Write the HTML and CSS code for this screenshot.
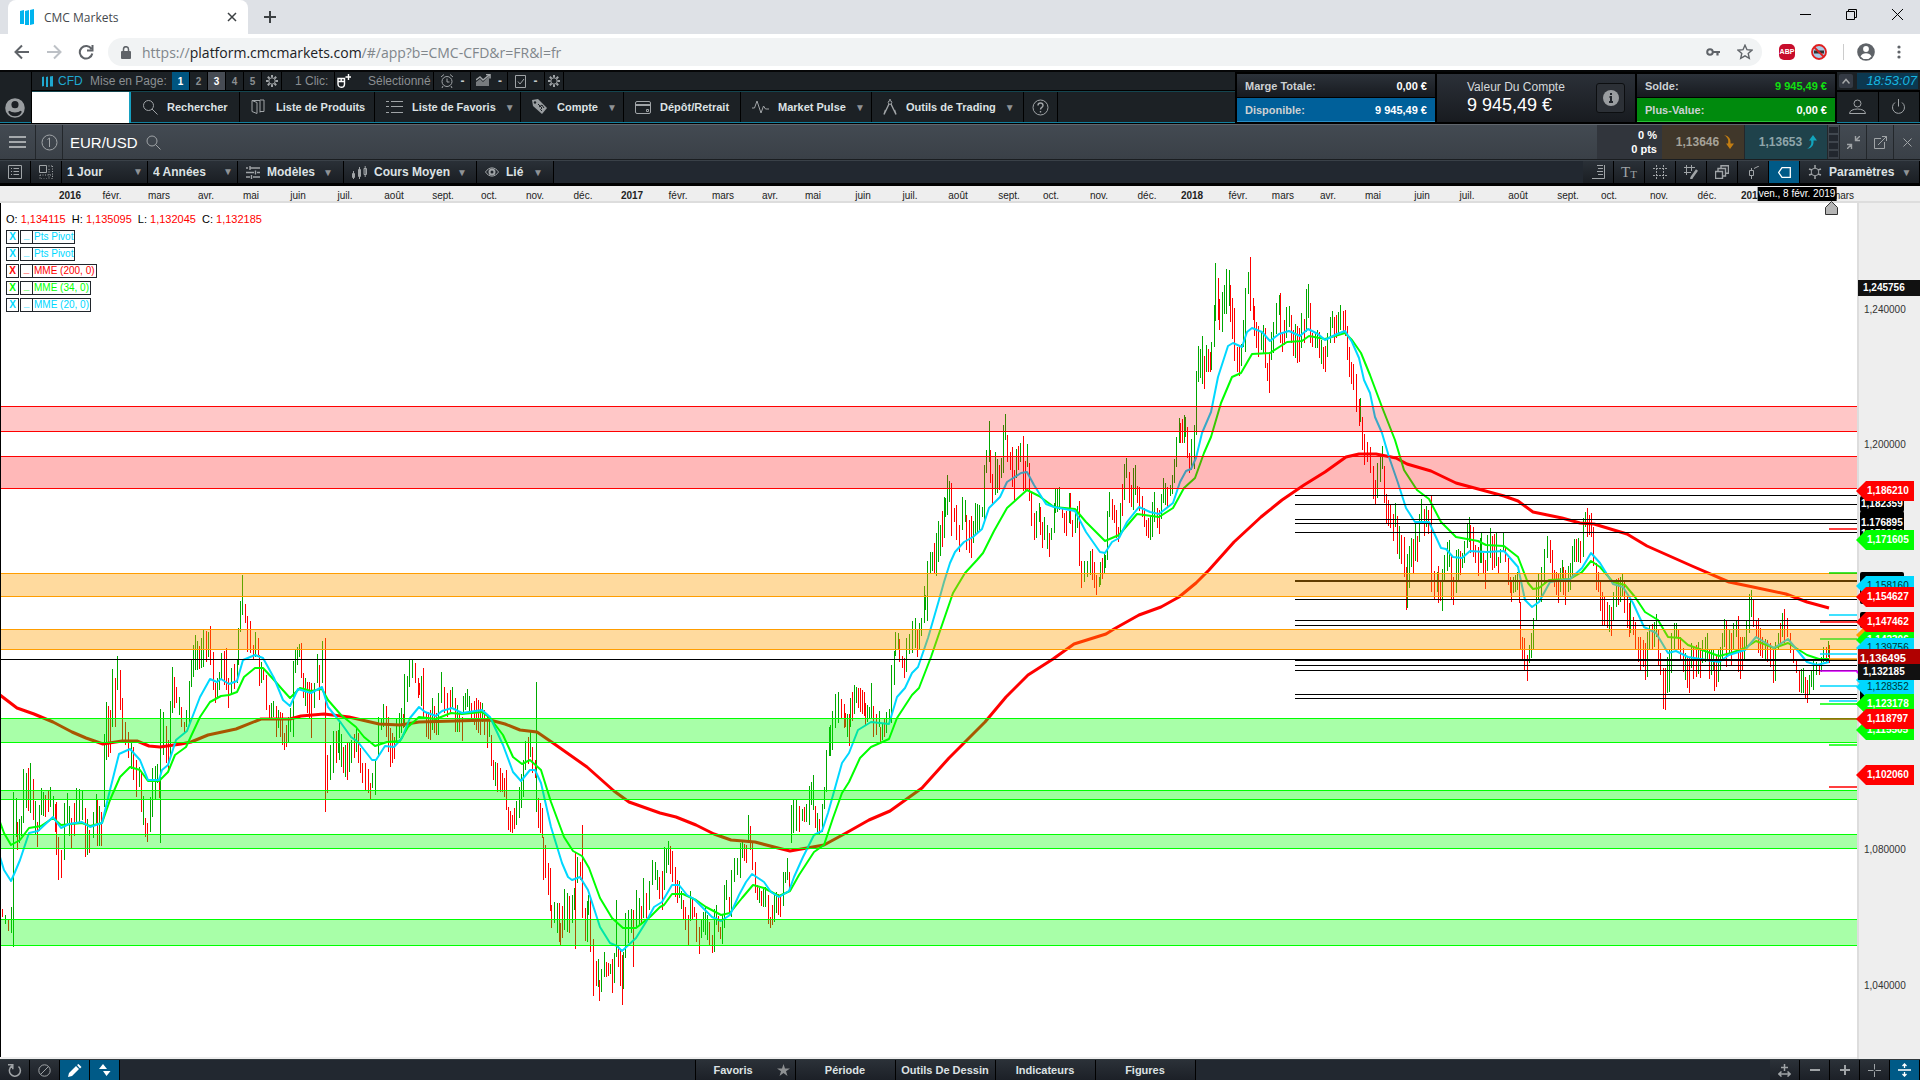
FILE: index.html
```html
<!DOCTYPE html>
<html lang="fr">
<head>
    <meta charset="UTF-8">
    <meta name="viewport" content="width=device-width, initial-scale=1.0">
    <title>CMC Markets</title>
    <link rel="stylesheet" href="styles.css">
</head>
<body>
    <div class="tab-strip">
        <div class="tab">
            <svg class="tab-logo" width="14" height="16" viewBox="0 0 14 16"><path d="M0 2l4-1v14H0zM5 2l4-1v15H5zM10 1l4-1v15l-4 1z" fill="#00b4ee"/></svg>
            <span class="tab-title">CMC Markets</span>
            <button class="tab-close" aria-label="Fermer l'onglet"><svg width="10" height="10" viewBox="0 0 10 10"><path d="M1 1l8 8M9 1l-8 8"/></svg></button>
        </div>
        <button class="tab-new" aria-label="Nouvel onglet"><svg width="12" height="12" viewBox="0 0 12 12"><path d="M6 0v12M0 6h12"/></svg></button>
        <div class="window-buttons">
            <button aria-label="Réduire"><svg width="11" height="11" viewBox="0 0 11 11"><path d="M0 5.500h11"/></svg></button>
            <button aria-label="Restaurer"><svg width="11" height="11" viewBox="0 0 11 11"><path d="M.5 2.500h8v8h-8zM2.500 2.500v-2h8v8h-2"/></svg></button>
            <button aria-label="Fermer"><svg width="11" height="11" viewBox="0 0 11 11"><path d="M0 0l11 11M11 0L0 11"/></svg></button>
        </div>
    </div>

    <div class="browser-bar">
        <button class="nav" aria-label="Précédent"><svg width="16" height="16" viewBox="0 0 16 16"><path d="M15 8H2M8 1.500L1.500 8 8 14.500"/></svg></button>
        <button class="nav off" aria-label="Suivant"><svg width="16" height="16" viewBox="0 0 16 16"><path d="M1 8h13M8 1.500L14.500 8 8 14.500"/></svg></button>
        <button class="nav" aria-label="Actualiser"><svg width="16" height="16" viewBox="0 0 16 16"><path d="M13.500 5A6.300 6.300 0 1 0 14.300 9.500M14.500 1v5.500H9"/></svg></button>
        <div class="address" role="textbox" aria-label="Adresse">
            <svg width="10" height="13" viewBox="0 0 10 13"><rect y="5" width="10" height="8" rx="1" fill="#5f6368"/><path d="M2.500 5V3.200a2.500 2.500 0 0 1 5 0V5" fill="none" stroke="#5f6368" stroke-width="1.500"/></svg>
            <span class="url">https://<b>platform.cmcmarkets.com</b>/#/app?b=CMC-CFD&amp;r=FR&amp;l=fr</span>
            <svg width="14" height="10" viewBox="0 0 14 10"><circle cx="4" cy="5" r="2.800" fill="none" stroke="#5f6368" stroke-width="2"/><path d="M6.500 5H14M11.500 5v3.500" stroke="#5f6368" stroke-width="2.200"/></svg>
            <svg class="star" width="16" height="16" viewBox="0 0 16 16"><path d="M8 1.200l2 4.500 4.900.5-3.700 3.300 1.100 4.900L8 11.900l-4.300 2.500 1.100-4.900L1.100 6.200 6 5.700z" fill="none" stroke="#5f6368" stroke-width="1.400"/></svg>
        </div>
        <div class="extensions">
            <span class="abp">ABP</span>
            <svg width="16" height="16" viewBox="0 0 16 16"><circle cx="8" cy="8" r="7" fill="#a9cbe6" stroke="#e02020" stroke-width="1.800"/><path d="M3 8h10" stroke="#333" stroke-width="3"/><path d="M3 3l10 10" stroke="#e02020" stroke-width="1.800"/></svg>
            <span class="divider"></span>
            <svg class="user" width="18" height="18" viewBox="0 0 18 18"><circle cx="9" cy="9" r="8.800" fill="#5f6368"/><circle cx="9" cy="6" r="2.900" fill="#fff"/><path d="M3.500 13.400a6.300 6.300 0 0 1 11 0 7 7 0 0 1-11 0z" fill="#fff"/></svg>
            <svg width="4" height="14" viewBox="0 0 4 14" fill="#5f6368"><circle cx="2" cy="2" r="1.600"/><circle cx="2" cy="7" r="1.600"/><circle cx="2" cy="12" r="1.600"/></svg>
        </div>
    </div>

    <header class="header">
        <div class="avatar"><svg width="20" height="20" viewBox="0 0 18 18"><circle cx="9" cy="9" r="8.800" fill="#999da0"/><circle cx="9" cy="6" r="3.200" fill="#1c2025"/><path d="M3.500 12a6 3 0 0 0 11 0 6 6 0 0 1-11 0z" fill="#1c2025" stroke="#1c2025" stroke-width="1.500"/></svg></div>
        <div class="header-main">
            <div class="top-row">
                <svg class="brand-logo" width="11" height="11" viewBox="0 0 11 11"><path d="M0 1l2-.5V10l-2 .5zM4 1l2-.5V11H4zM8 .5l3-.5v10.500H8z" fill="#1fa8d0"/></svg>
                <span class="brand">CFD</span>
                <span class="layout-label">Mise en Page:</span>
                <button class="page active">1</button>
                <button class="page">2</button>
                <button class="page current">3</button>
                <button class="page">4</button>
                <button class="page">5</button>
                <button class="page gear" aria-label="Réglages de la mise en page"><svg class="ico" width="12" height="12" viewBox="0 0 12 12"><circle cx="6" cy="6" r="3.200"/><path d="M6 0v2.500M6 9.500V12M0 6h2.500M9.500 6H12M1.800 1.800l1.700 1.700M8.500 8.500l1.700 1.700M10.200 1.800L8.500 3.500M3.500 8.500l-1.700 1.700" stroke-width="2"/></svg></button>
                <span class="click-label">1 Clic:</span>
                <button class="mouse" aria-label="1 Clic"><svg width="14" height="14" viewBox="0 0 14 14" fill="none" stroke="#fff" stroke-width="1.400"><path d="M1 4.500h6.500V10a3 3 0 0 1-6.500 0zM1 7.500h6.500M4.200 4.500v3M11.500 0v6M8.500 3H14"/></svg></button>
                <span class="selected-label">Sélectionné</span>
                <button class="quick" aria-label="Alertes"><svg class="ico" width="14" height="14" viewBox="0 0 14 14"><circle cx="7" cy="7.500" r="5"/><path d="M7 4.500v3.500h2.500M1 3l3-2.500M13 3l-3-2.500M3 12l-1 2M11 12l1 2"/></svg><b>-</b></button>
                <button class="quick" aria-label="Positions"><svg class="ico" width="15" height="14" viewBox="0 0 15 14"><path d="M0 12V8l4-3 3 3 6-6v10z" fill="#777b7e" stroke="none"/><path d="M0 6l4-3 3 3 7-5.500M10 .5h4v4" stroke-width="1.500"/></svg><b>-</b></button>
                <button class="quick" aria-label="Ordres"><svg class="ico" width="12" height="14" viewBox="0 0 12 14"><path d="M.5 1.500h10v12H.5zM3 7.500L5 10l4-5"/></svg><b>-</b></button>
                <button class="page gear" aria-label="Réglages"><svg class="ico" width="12" height="12" viewBox="0 0 12 12"><circle cx="6" cy="6" r="3.200"/><path d="M6 0v2.500M6 9.500V12M0 6h2.500M9.500 6H12M1.800 1.800l1.700 1.700M8.500 8.500l1.700 1.700M10.200 1.800L8.500 3.500M3.500 8.500l-1.700 1.700" stroke-width="2"/></svg></button>
            </div>
            <nav class="menu-row">
                <div class="account-box"></div>
                <button class="menu w-search"><svg class="ico" width="16" height="16" viewBox="0 0 16 16"><circle cx="6.500" cy="6.500" r="5"/><path d="M10 10l5.500 5.500"/></svg><span>Rechercher</span></button>
                <button class="menu w-products"><svg class="ico" width="14" height="16" viewBox="0 0 14 16"><path d="M1 1.500h8v12M1 1.500l5 2v11l-5-2zM9 1h4v11.500H9"/></svg><span>Liste de Produits</span></button>
                <button class="menu w-fav"><svg class="ico" width="17" height="14" viewBox="0 0 17 14"><path d="M0 1.500h3M0 6.500h3M0 12.500h3M5 1.500h12M5 6.500h12M5 12.500h12"/></svg><span>Liste de Favoris</span><i>▼</i></button>
                <button class="menu w-account"><svg width="16" height="16" viewBox="0 0 16 16"><path d="M0 1l6-1 9 9-5 6L1 7z" fill="#999da0"/><circle cx="3" cy="3.500" r="1.200" fill="#1c2125"/><path d="M6 5l4 4-1.500 1.500L10 12M7 8l3-2 2 3" fill="none" stroke="#1c2125"/></svg><span>Compte</span><i>▼</i></button>
                <button class="menu w-deposit"><svg class="ico" width="16" height="13" viewBox="0 0 16 13"><rect x=".5" y=".5" width="15" height="12" rx="1.500"/><path d="M0 4h16" stroke-width="2"/><path d="M11.500 8.500h2v2h-2z"/></svg><span>Dépôt/Retrait</span></button>
                <button class="menu w-pulse"><svg class="ico" width="17" height="14" viewBox="0 0 17 14"><path d="M0 8h2.500L5 1l4 12 2.500-7 2 3H17"/></svg><span>Market Pulse</span><i>▼</i></button>
                <button class="menu w-tools"><svg class="ico" width="14" height="16" viewBox="0 0 14 16"><circle cx="7" cy="3.500" r="1.800"/><path d="M7 0v1.500M6 5L1 15.500 2.500 11M8 5l5 10.500-1.500-4.500" stroke-width="1.400"/></svg><span>Outils de Trading</span><i>▼</i></button>
                <button class="menu w-help" aria-label="Aide"><svg class="ico" width="17" height="17" viewBox="0 0 17 17"><circle cx="8.500" cy="8.500" r="7.500"/><path d="M6 6.500c0-3.300 5-3.300 5 0 0 2-2.500 1.800-2.500 4M8.500 12v1.500" stroke-width="1.400"/></svg></button>
            </nav>
        </div>
        <div class="funds">
            <dl class="fund-pair">
                <div class="fund"><dt>Marge Totale:</dt><dd>0,00 €</dd></div>
                <div class="fund available"><dt>Disponible:</dt><dd>9 945,49 €</dd></div>
            </dl>
            <div class="account-value">
                <p>Valeur Du Compte<strong>9 945,49 €</strong></p>
                <button class="info" aria-label="Informations"><svg width="16" height="16" viewBox="0 0 16 16"><circle cx="8" cy="8" r="8" fill="#9a9da0"/><path d="M8 3v2M6.500 7H8v5M6 12h4" fill="none" stroke="#20242a" stroke-width="2"/></svg></button>
            </div>
            <dl class="fund-pair">
                <div class="fund"><dt>Solde:</dt><dd class="positive">9 945,49 €</dd></div>
                <div class="fund profit"><dt>Plus-Value:</dt><dd>0,00 €</dd></div>
            </dl>
        </div>
        <div class="session">
            <div class="session-top">
                <button class="collapse" aria-label="Replier"><svg width="8" height="6" viewBox="0 0 8 6"><path d="M.5 5.500L4 1.500l3.500 4" fill="none" stroke="#a5a8aa" stroke-width="1.500"/></svg></button>
                <time class="clock">18:53:07</time>
            </div>
            <div class="session-bottom">
                <button aria-label="Profil"><svg class="ico" width="17" height="16" viewBox="0 0 17 16"><circle cx="8.500" cy="4.500" r="3.500"/><path d="M.5 14.500c0-6 16-6 16 0z"/></svg></button>
                <button aria-label="Déconnexion"><svg class="ico" width="15" height="16" viewBox="0 0 15 16"><path d="M4 3.500a6 6 0 1 0 7 0M7.500 0v7.500"/></svg></button>
            </div>
        </div>
    </header>

    <section class="title-bar">
        <button class="burger" aria-label="Menu"><svg width="17" height="13" viewBox="0 0 17 13"><path d="M0 1h17M0 6h17M0 11h17"/></svg></button>
        <button class="group" aria-label="Groupe 1"><svg class="ico" width="17" height="17" viewBox="0 0 17 17"><circle cx="8.500" cy="8.500" r="7.500"/><path d="M6.500 5.500l2-1.500v9"/></svg></button>
        <h1>EUR/USD</h1>
        <svg class="ico find" width="15" height="15" viewBox="0 0 15 15"><circle cx="6" cy="6" r="5"/><path d="M9.500 9.500l5 5"/></svg>
        <div class="change"><span>0 %</span><span>0 pts</span></div>
        <button class="quote sell">1,13646<svg width="10" height="14" viewBox="0 0 10 14"><path d="M0 0c5 1 7 4 6.500 8.500H10L6 14 2 8.500h2C5 5 3.500 2 0 0z" fill="#c27d12"/></svg></button>
        <button class="quote buy">1,13653<svg width="10" height="14" viewBox="0 0 10 14"><path d="M0 14c5-1 7-4 6.500-8.500H10L6 0 2 5.500h2C5 9 3.500 12 0 14z" fill="#12a5bd"/></svg></button>
        <div class="grip"><span></span><span></span><span></span><span></span></div>
        <button class="win" aria-label="Réduire"><svg class="ico" width="13" height="13" viewBox="0 0 13 13"><path d="M13 0L8.500 4.500M8.500 0v4.500H13M0 13l4.500-4.500M0 8.500h4.500V13" stroke-width="1.400"/></svg></button>
        <button class="win" aria-label="Détacher"><svg class="ico" width="13" height="13" viewBox="0 0 13 13"><path d="M7 2.500H.5v10h10V6M4 9l8.500-8.500M8 .5h4.500V5"/></svg></button>
        <button class="win" aria-label="Fermer"><svg class="ico" width="9" height="9" viewBox="0 0 9 9"><path d="M.5.5l8 8M8.500.5l-8 8"/></svg></button>
    </section>

    <section class="toolbar">
        <button class="tool" aria-label="Liste"><svg class="ico" width="14" height="14" viewBox="0 0 14 14"><path d="M.5.5h13v13H.5zM3 3.500h1M3 6.500h1M3 9.500h1M5.500 3.500H11M5.500 6.500H11M5.500 9.500H11"/></svg></button>
        <button class="tool" aria-label="Disposition"><svg class="ico" width="14" height="14" viewBox="0 0 14 14"><path d="M.5.5h7v7h-7z"/><path d="M9.500 1H14M13.500 1v13M10 4v10M1 10v4h13M1 10h13" stroke-dasharray="1 1.500"/></svg></button>
        <label class="drop w-period"><select aria-label="Intervalle"><option>1 Jour</option></select><i>▼</i></label>
        <label class="drop w-range"><select aria-label="Durée"><option>4 Années</option></select><i>▼</i></label>
        <button class="menu w-models"><svg class="ico" width="14" height="13" viewBox="0 0 14 13"><path d="M0 2h2M4 2h10M4 0v4M0 6.500h8M11 6.500h3M9.500 4.500v4M0 11h4M7 11h7M5.500 9v4" stroke-width="1.400"/></svg><span>Modèles</span><i>▼</i></button>
        <button class="menu w-mid"><svg class="ico" width="15" height="13" viewBox="0 0 15 13"><path d="M.5 7.500h2v4h-2zM1.500 5v8M6.500 3.500h2v7h-2zM7.500 1v12M12 2.500h2.500v6H12zM13.200 0v11"/></svg><span>Cours Moyen</span><i>▼</i></button>
        <button class="menu w-linked"><svg class="ico" width="14" height="10" viewBox="0 0 14 10"><path d="M.5 5C4-.5 10-.5 13.500 5 10 10.500 4 10.500.5 5z"/><circle cx="7" cy="5" r="2.500" stroke-width="2"/></svg><span>Lié</span><i>▼</i></button>
        <div class="spacer"></div>
        <button class="tool" aria-label="Échelle"><svg class="ico" width="13" height="14" viewBox="0 0 13 14"><path d="M5 .5h6M6 3.500h5M5 6.500h6M6 9.500h5M0 13.500h12.500V0"/></svg></button>
        <button class="tool letters" aria-label="Texte">T<small>T</small></button>
        <button class="tool" aria-label="Grille"><svg class="ico" width="14" height="14" viewBox="0 0 14 14"><path d="M0 3.500h14M0 10.500h14M3.500 0v14M10.500 0v14" stroke-dasharray="2 1"/></svg></button>
        <button class="tool" aria-label="Dessin"><svg class="ico" width="14" height="14" viewBox="0 0 14 14"><path d="M0 2.500h11M0 7.500h7M2.500 0v10M7.500 0v6"/><path d="M13 5l-5 7-1 2" stroke-width="2.500"/></svg></button>
        <button class="tool" aria-label="Calques"><svg class="ico" width="14" height="14" viewBox="0 0 14 14"><path d="M.5 6.500h7v7h-7zM3 6V3.500h7.500V11H8M6 3V.8h7.500v7.500h-3" stroke-width="1.400"/></svg></button>
        <button class="tool" aria-label="Bougie"><svg class="ico" width="13" height="13" viewBox="0 0 13 13"><path d="M2.500 4.500h4v5h-4zM4.500 2v2.500M4.500 9.500V13M7 2.500L12 0"/></svg></button>
        <button class="tool on" aria-label="Étiquettes de prix"><svg width="13" height="11" viewBox="0 0 13 11"><path d="M4 .7h8.300v9.600H4L.7 5.500z" fill="none" stroke="#fff" stroke-width="1.300"/></svg></button>
        <button class="menu w-settings"><svg class="ico" width="14" height="14" viewBox="0 0 14 14"><circle cx="7" cy="7" r="3.800"/><path d="M7 0v3M7 11v3M1 4l3 1M10 9l3 1M1 10l3-1M10 5l3-1" stroke-width="1.500"/></svg><span>Paramètres</span><i>▼</i></button>
    </section>

    <main class="chart">
        <div class="time-axis" id="time-axis"></div>
        <div class="plot">
            <svg class="plot-svg" id="plot" viewBox="0 203 1857 854" preserveAspectRatio="none"></svg>
            <div class="legend">
                <p class="ohlc">O: <b>1,134115</b> H: <b>1,135095</b> L: <b>1,132045</b> C: <b>1,132185</b></p>
                <div class="indicator cyan"><button aria-label="Supprimer">X</button><button class="hide" aria-label="Masquer">_</button><span>Pts Pivot</span></div>
                <div class="indicator cyan"><button aria-label="Supprimer">X</button><button class="hide" aria-label="Masquer">_</button><span>Pts Pivot</span></div>
                <div class="indicator red"><button aria-label="Supprimer">X</button><button class="hide" aria-label="Masquer">_</button><span>MME (200, 0)</span></div>
                <div class="indicator green"><button aria-label="Supprimer">X</button><button class="hide" aria-label="Masquer">_</button><span>MME (34, 0)</span></div>
                <div class="indicator cyan"><button aria-label="Supprimer">X</button><button class="hide" aria-label="Masquer">_</button><span>MME (20, 0)</span></div>
            </div>
        </div>
        <div class="price-axis" id="price-axis"></div>
    </main>

    <footer class="footer">
        <div class="footer-group">
            <button class="foot-icon" aria-label="Réinitialiser"><svg class="ico" width="14" height="13" viewBox="0 0 14 13"><path d="M4 2a5.500 5.500 0 1 0 6.500.5M0 .8h4.800v4.500" stroke-width="1.500"/></svg></button>
            <button class="foot-icon" aria-label="Aucun"><svg class="ico" width="13" height="13" viewBox="0 0 13 13"><circle cx="6.500" cy="6.500" r="5.700"/><path d="M2.500 10.500l8-8"/></svg></button>
            <button class="foot-icon on" aria-label="Crayon"><svg width="14" height="13" viewBox="0 0 14 13"><path d="M0 13l1-4 7-7 3 3-7 7zM9 1l1.500-1 3 3L12 4.500z" fill="#fff"/></svg></button>
            <button class="foot-icon on" aria-label="Haut et bas"><svg width="12" height="12" viewBox="0 0 12 12"><path d="M0 5l4-5 4 5zM4 7h7.500l-4 5z" fill="#fff"/></svg></button>
        </div>
        <div class="footer-group">
            <button class="foot-tab">Favoris<svg class="fav" width="13" height="12" viewBox="0 0 13 12"><path d="M6.500 0L8 4.500h5L9 7.300l1.500 4.700-4-2.900-4 2.900L4 7.300 0 4.500h5z" fill="#8d9092"/></svg></button>
            <button class="foot-tab">Période</button>
            <button class="foot-tab">Outils De Dessin</button>
            <button class="foot-tab">Indicateurs</button>
            <button class="foot-tab">Figures</button>
        </div>
        <div class="footer-group">
            <button class="foot-icon" aria-label="Étendre"><svg class="ico" width="13" height="13" viewBox="0 0 13 13"><path d="M6.500 0v7M3 3.500h7M.8 10h11.400M3.500 7.500L.8 10l2.700 2.500M9.500 7.500l2.700 2.500-2.700 2.500" stroke-width="1.500"/></svg></button>
            <button class="foot-icon" aria-label="Zoom arrière"><svg class="ico" width="10" height="10" viewBox="0 0 10 10"><path d="M0 5h10" stroke-width="2"/></svg></button>
            <button class="foot-icon" aria-label="Zoom avant"><svg class="ico" width="10" height="10" viewBox="0 0 10 10"><path d="M0 5h10M5 0v10" stroke-width="2"/></svg></button>
            <button class="foot-icon" aria-label="Curseur"><svg class="ico" width="13" height="13" viewBox="0 0 13 13"><path d="M0 6.500h5.500M7.500 6.500H13M6.500 0v5.500M6.500 7.500V13"/></svg></button>
            <button class="foot-icon on" aria-label="Ajuster"><svg width="13" height="14" viewBox="0 0 13 14"><path d="M0 7h13M6.500 1v4M6.500 9v4M4.500 3l2-2 2 2M4.500 11l2 2 2-2" fill="none" stroke="#fff" stroke-width="1.300"/></svg></button>
        </div>
    </footer>

    <script src="chart.js"></script>
</body>
</html>
```
FILE: styles.css
```css
* {
    box-sizing: border-box;
}
body {
    margin: 0;
    height: 100vh;
    display: flex;
    flex-direction: column;
    overflow: hidden;
    background: #000;
    font-family: "Liberation Sans", Arial, sans-serif;
    font-size: 11px;
}
button {
    margin: 0;
    padding: 0;
    border: 0;
    background: none;
    color: inherit;
    font: inherit;
    cursor: pointer;
    display: flex;
    align-items: center;
    justify-content: center;
}
svg {
    display: block;
    flex: none;
}
i {
    font-style: normal;
}
dl, dd, p, h1 {
    margin: 0;
}
.ico {
    fill: none;
    stroke: #a0a4a7;
    stroke-width: 1;
}

/* browser */
.tab-strip {
    flex: none;
    height: 34px;
    background: #dee1e6;
    display: flex;
    padding-left: 8px;
}
.tab {
    width: 240px;
    background: #fff;
    border-radius: 8px 8px 0 0;
    display: flex;
    align-items: center;
    padding: 0 11px 0 12px;
}
.tab-title {
    flex: 1;
    margin-left: 10px;
    font: 12px "Open Sans", sans-serif;
    color: #45494d;
}
.tab-close path, .tab-new path {
    fill: none;
    stroke: #3c4043;
    stroke-width: 2;
}
.tab-close path {
    stroke-width: 1.5;
}
.tab-new {
    margin-left: 16px;
}
.window-buttons {
    margin-left: auto;
    display: flex;
}
.window-buttons button {
    width: 46px;
    height: 28px;
}
.window-buttons path {
    fill: none;
    stroke: #000;
}
.browser-bar {
    flex: none;
    height: 36px;
    background: #fff;
    display: flex;
    align-items: center;
    padding-left: 6px;
}
.nav {
    width: 32px;
}
.nav path {
    fill: none;
    stroke: #5f6368;
    stroke-width: 2;
}
.nav.off path {
    stroke: #bdc1c6;
}
.address {
    flex: 1;
    height: 28px;
    margin-left: 6px;
    padding: 0 9px 0 13px;
    border-radius: 14px;
    background: #f1f3f4;
    display: flex;
    align-items: center;
}
.url {
    flex: 1;
    margin-left: 11px;
    font: 14px "Open Sans", sans-serif;
    color: #80868b;
}
.url b {
    font-weight: normal;
    color: #202124;
}
.star {
    margin-left: 17px;
}
.extensions {
    width: 158px;
    display: flex;
    align-items: center;
    gap: 16px;
    padding-left: 17px;
}
.abp {
    width: 16px;
    height: 16px;
    border-radius: 5px;
    background: #c70d2c;
    color: #fff;
    font-size: 7px;
    font-weight: bold;
    line-height: 16px;
    text-align: center;
}
.divider {
    width: 1px;
    height: 16px;
    background: #ccc;
}
.extensions .user {
    margin: 0 6px 0 -3px;
}

/* platform header */
.header {
    flex: none;
    height: 54px;
    border-top: 2px solid #050607;
    border-bottom: 1px solid #000;
    box-shadow: inset 0 -1px #12809f;
    background: #1c2125;
    display: flex;
    color: #d5d9db;
}
.avatar {
    width: 32px;
    padding: 26px 0 0 5px;
    border-right: 1px solid #000;
}
.header-main {
    flex: 1;
    min-width: 0;
}
.top-row {
    height: 19px;
    border-bottom: 1px solid #000;
    display: flex;
    align-items: center;
    color: #8b8f92;
    font-size: 12px;
    padding-left: 10px;
    white-space: nowrap;
}
.brand {
    width: 32px;
    margin-left: 5px;
    color: #1fa8d0;
}
.brand-logo {
    margin-top: 1px;
}
.layout-label {
    width: 75px;
}
.page {
    width: 18px;
    height: 18px;
    border-right: 1px solid #000;
    font-size: 10px;
    font-weight: bold;
}
.layout-label + .page {
    margin-left: 7px;
}
.page.active {
    background: #005580;
    color: #fff;
}
.page.current {
    background: #474c54;
    color: #fff;
}
.page.gear {
    width: 20px;
}
.click-label {
    margin-left: 13px;
    width: 39px;
}
.mouse {
    width: 18px;
    height: 18px;
    border-left: 1px solid #000;
}
.selected-label {
    margin-left: 16px;
    width: 65px;
}
.quick {
    width: 37px;
    height: 18px;
    gap: 7px;
    border-left: 1px solid #000;
    color: #c5c9cc;
}
.quick + .page {
    border-left: 1px solid #000;
}
.menu-row {
    height: 32px;
    border-top: 1px solid #14454f;
    display: flex;
}
.account-box {
    width: 99px;
    height: 31px;
    background: #fff;
    border-right: 2px solid #16a0c0;
}
.menu {
    height: 100%;
    border-right: 1px solid #000;
    font-weight: bold;
    color: #dde2e4;
    white-space: nowrap;
    justify-content: flex-start;
    padding-left: 11px;
    gap: 9px;
}
.menu i, .drop i {
    color: #8f9396;
    font-size: 10px;
}
.menu i {
    margin-left: auto;
    margin-right: 10px;
}
.menu-row .menu {
    height: 30px;
}
.w-search { width: 109px; }
.w-products { width: 135px; gap: 11px; }
.w-fav { width: 146px; }
.w-account { width: 103px; }
.w-deposit { width: 117px; }
.w-pulse { width: 131px; }
.w-tools { width: 152px; }
.w-help { width: 34px; padding-left: 8px; }
.funds {
    display: flex;
    gap: 2px;
    padding: 2px 2px 1px 2px;
    background: #000;
}
.fund-pair {
    width: 198px;
    display: flex;
    flex-direction: column;
    gap: 1px;
}
.fund {
    flex: 1;
    display: flex;
    align-items: center;
    justify-content: space-between;
    padding: 0 8px;
    background: linear-gradient(#2c323a, #171a1f);
    font-weight: bold;
    color: #cdd1d3;
}
.fund dd {
    color: #fff;
}
.fund.available {
    background: #00609a;
    border-bottom: 1px solid #2a8fc8;
}
.fund.profit {
    background: #008a0d;
    border-bottom: 1px solid #29c236;
}
.fund .positive {
    color: #10e010;
}
.account-value {
    width: 198px;
    display: flex;
    justify-content: space-between;
    align-items: center;
    padding: 0 10px 0 30px;
    background: linear-gradient(#2b3038, #181b20);
    font-size: 12px;
}
.account-value strong {
    display: block;
    font-weight: normal;
    font-size: 18px;
    line-height: 22px;
    color: #fff;
}
.info {
    width: 29px;
    height: 30px;
    border: 1px solid #0c0e10;
    border-radius: 3px;
    background: #2c3036;
}
.session {
    width: 83px;
}
.session-top {
    height: 20px;
    display: flex;
    align-items: center;
    justify-content: space-between;
    padding: 0 2px;
    border-bottom: 2px solid #000;
}
.collapse {
    width: 14px;
    height: 14px;
    background: #343a44;
    border-radius: 2px;
}
.clock {
    width: 61px;
    height: 16px;
    padding-right: 1px;
    background: #0c3850;
    color: #17b6e0;
    font-size: 13px;
    font-style: italic;
    line-height: 16px;
    text-align: right;
}
.session-bottom {
    display: flex;
    height: 30px;
}
.session-bottom button {
    flex: 1;
    border-right: 1px solid #000;
}

/* instrument title */
.title-bar {
    flex: none;
    height: 36px;
    border-top: 1px solid #60666d;
    border-bottom: 1px solid #1a1d20;
    background: linear-gradient(#434a52, #3a4047);
    display: flex;
    align-items: center;
    color: #fff;
}
.title-bar button {
    height: 100%;
    border-right: 1px solid #23272b;
}
.burger {
    width: 36px;
}
.burger path {
    stroke: #a5a9ac;
    stroke-width: 2;
}
.title-bar .group {
    width: 27px;
}
.title-bar h1 {
    margin: 0 8px 0 7px;
    font-size: 15px;
    font-weight: normal;
}
.change {
    width: 65px;
    height: 100%;
    margin-left: auto;
    padding-right: 5px;
    background: #31353c;
    display: flex;
    flex-direction: column;
    justify-content: center;
    text-align: right;
    font-weight: bold;
    line-height: 14px;
}
.title-bar .quote {
    width: 83px;
    padding-left: 4px;
    gap: 5px;
    font-size: 12px;
    font-weight: bold;
    color: #a5a298;
}
.title-bar .sell {
    background: #40372a;
}
.title-bar .buy {
    background: #1f424b;
    color: #8fa5aa;
}
.grip {
    width: 11px;
    padding: 0 1px;
    display: flex;
    flex-direction: column;
    gap: 2px;
}
.grip span {
    height: 6px;
    background: #22272e;
}
.title-bar .win {
    width: 27px;
    border-right: 0;
    border-left: 1px solid #23272b;
}

/* chart toolbar */
.toolbar {
    flex: none;
    height: 26px;
    border-top: 1px solid #3a4148;
    border-bottom: 3px solid #000;
    background: #222830;
    display: flex;
}
.toolbar .menu, .tool, .drop {
    background: linear-gradient(#2a3037, #1a1e23);
}
.tool {
    width: 31px;
    border-right: 1px solid #000;
}
.toolbar .menu {
    font-size: 12px;
    padding-left: 8px;
    gap: 7px;
}
.tool.on, .foot-icon.on {
    background: #005a87;
}
.letters {
    font: 15px "Liberation Serif", serif;
    color: #a0a4a7;
}
.letters small {
    font-size: 11px;
    padding-top: 3px;
}
.drop {
    position: relative;
    border-right: 1px solid #000;
    color: #dde2e4;
}
.drop select {
    width: 100%;
    height: 100%;
    padding: 0 5px;
    border: 0;
    appearance: none;
    background: none;
    color: inherit;
    font: bold 12px "Liberation Sans", Arial, sans-serif;
}
.drop i {
    position: absolute;
    right: 4px;
    top: 5px;
    pointer-events: none;
}
.w-period { width: 86px; }
.w-range { width: 90px; }
.w-models { width: 106px; }
.w-mid { width: 133px; }
.w-linked { width: 77px; }
.w-settings { width: 120px; }
.spacer {
    flex: 1;
}

/* chart */
.chart {
    flex: 1;
    min-height: 0;
    display: grid;
    grid-template-columns: 1fr 63px;
    grid-template-rows: 17px 1fr;
    background: #eee;
}
.time-axis {
    grid-column: 1 / 3;
    position: relative;
    border-bottom: 2px solid #ddd;
    font-size: 10px;
    line-height: 19px;
    color: #222;
}
.time-axis span {
    position: absolute;
    transform: translateX(-50%);
    top: 0;
}
.time-axis .year {
    font-weight: bold;
}
.time-axis .cursor-date {
    top: 1px;
    padding: 0 1px;
    background: #000;
    color: #fff;
    line-height: 14px;
    white-space: nowrap;
}
.plot {
    position: relative;
    min-height: 0;
    background: #fff;
    border-bottom: 2px solid #eee;
}
.plot-svg {
    position: absolute;
    width: 100%;
    height: 100%;
    overflow: visible;
}
.legend {
    position: absolute;
    left: 6px;
    top: 10px;
    font-size: 10px;
}
.ohlc {
    height: 17px;
    line-height: 13px;
    color: #000;
    font-size: 11px;
}
.ohlc b {
    font-weight: normal;
    color: red;
    margin-right: 3px;
}
.indicator {
    display: flex;
    height: 14px;
    margin-bottom: 3px;
    line-height: 12px;
}
.indicator button, .indicator span {
    border: 1px solid #20252b;
    height: 14px;
    background: #fff;
}
.indicator button {
    width: 13px;
    margin-right: 1px;
    font-weight: bold;
}
.indicator .hide {
    margin-right: 0;
    align-items: flex-start;
    line-height: 8px;
}
.indicator span {
    margin-left: -1px;
    padding: 0 1px;
}
.cyan { color: #00d8ff; }
.red { color: red; }
.green { color: #0f0; }
.price-axis {
    position: relative;
    border-left: 2px solid #ddd;
    font-size: 10px;
}
.price {
    position: absolute;
    left: 5px;
    transform: translateY(-50%);
    line-height: 16px;
    color: #333;
    white-space: nowrap;
}
.price.box {
    left: 1px;
    width: 44px;
    padding-left: 1px;
    height: 16px;
    border-radius: 2px;
    background: #000;
    color: #fff;
    font-weight: bold;
}
.price.wide {
    left: -1px;
    right: 0;
    padding-left: 5px;
    background: #111;
    color: #fff;
    font-weight: bold;
}
.price.wide.last {
    padding-left: 2px;
    font-size: 11px;
    line-height: 18px;
    background: #b00000;
}
.price.tag {
    left: -3px;
    width: 58px;
    padding-left: 11px;
    line-height: 20px;
    height: 20px;
    color: #fff;
    font-weight: bold;
    background: red;
    clip-path: polygon(0 50%, 10px 0, 100% 0, 100% 100%, 10px 100%);
}
.price.tag.lime { background: #0f0; }
.price.tag.aqua { background: #00d8ff; color: #033; font-weight: normal; }
.price.tag.orange { background: #ff9d00; }
.price.tag.violet { background: #d0f; }

/* chart drawing */
.up { stroke: #00a800; }
.down { stroke: #f00; }
.up, .down {
    fill: none;
    shape-rendering: crispEdges;
}
.ma {
    fill: none;
    stroke-width: 2;
    stroke-linejoin: round;
}
.ma.slow {
    stroke-width: 3;
}
.level {
    stroke: #000;
    shape-rendering: crispEdges;
}
.zone {
    shape-rendering: crispEdges;
}

/* footer */
.footer {
    flex: none;
    height: 21px;
    background: #222830;
    border-top: 1px solid #30383c;
    display: flex;
    justify-content: space-between;
    color: #dde2e4;
    font-weight: bold;
}
.footer-group {
    display: flex;
}
.foot-icon, .foot-tab {
    background: linear-gradient(#2b3138, #1c2027);
    border-right: 1px solid #000;
}
.foot-icon {
    width: 30px;
}
.foot-tab {
    position: relative;
    width: 100px;
}
.foot-tab:first-child {
    padding-right: 24px;
    border-left: 1px solid #000;
    width: 101px;
}
.fav {
    position: absolute;
    right: 5px;
}
```
FILE: chart.js
```js
const SVG_NS = 'http://www.w3.org/2000/svg';
const VIEW = { width: 1857, top: 203, height: 854 };
const plot = document.getElementById('plot');

// one daily bar per entry: x, high, low
const bars = `2 909 917,8 920 931,11 907 933,13 792 947,16 798 837,17 822 850,21 816 836,23 769 823,26 773 808,30 763 813,33 779 820,37 822 847,41 788 815,45 795 817,50 787 807,55 804 832,56 802 855,58 837 880,61 850 878,64 803 860,67 793 823,71 818 848,76 788 823,82 790 820,85 808 857,89 830 853,96 794 823,97 800 846,101 812 846,104 734 807,106 702 760,110 710 753,112 669 727,115 678 727,117 656 690,120 670 710,122 698 740,125 722 745,128 732 758,133 747 780,136 760 797,139 767 787,141 773 812,145 818 837,147 823 842,150 797 832,152 768 817,157 764 783,159 777 798,160 709 843,163 712 755,168 740 770,170 701 757,172 667 713,176 687 703,181 707 727,184 722 732,186 710 727,189 681 723,191 659 687,193 645 677,195 635 670,199 646 669,203 630 667,208 632 657,210 626 665,213 652 690,215 683 703,219 672 690,221 653 680,226 648 690,228 678 708,231 668 695,237 660 683,238 628 665,240 601 632,242 575 615,245 604 623,247 616 652,250 621 653,253 645 660,255 632 657,258 638 655,259 655 686,263 668 680,266 675 710,269 705 720,273 701 717,276 706 737,278 710 728,282 713 745,284 733 750,288 717 743,290 708 732,293 661 737,295 649 673,299 644 657,301 643 678,303 673 698,307 682 713,309 682 718,311 683 738,314 683 708,317 654 683,319 665 700,322 641 683,325 638 812,327 755 793,330 745 780,333 731 773,338 730 753,339 720 760,343 747 773,347 743 780,351 740 763,356 728 752,358 733 763,362 763 783,365 763 790,368 769 793,370 783 799,372 773 788,375 760 795,378 717 757,381 718 730,383 704 727,386 706 737,390 728 767,394 737 759,396 718 743,401 708 733,403 714 728,404 674 727,407 676 702,409 660 687,412 660 678,415 663 683,418 678 698,419 683 695,423 668 717,426 713 737,430 710 740,432 698 730,436 713 735,438 693 735,441 672 703,444 687 713,447 693 717,452 687 707,455 698 732,459 712 732,462 717 741,463 696 713,467 689 707,471 703 720,476 698 730,480 702 735,482 703 722,484 710 735,487 717 748,489 718 737,491 735 766,493 760 780,497 763 792,502 773 792,504 778 797,506 770 810,508 807 830,512 815 833,516 801 825,519 787 818,523 760 797,525 741 770,530 732 757,532 747 773,535 760 778,536 682 812,538 798 828,542 808 838,543 837 880,545 845 878,548 863 895,550 868 911,551 905 928,554 902 923,559 903 942,560 923 945,564 889 930,569 896 933,572 895 923,574 888 910,575 852 949,577 857 883,580 862 880,582 825 918,585 908 941,587 901 942,588 895 915,590 898 952,593 939 996,596 961 986,598 959 987,599 980 1001,601 969 992,604 952 977,606 962 977,610 964 974,612 959 993,614 953 983,616 900 957,618 945 967,622 955 1005,623 952 989,625 913 958,628 910 943,631 909 933,633 910 967,636 890 927,641 906 923,643 878 918,646 893 918,649 881 910,652 860 885,655 862 880,659 877 899,662 871 910,664 847 890,666 848 873,668 841 865,672 851 882,675 867 897,677 880 903,679 881 898,683 900 919,685 907 930,688 915 945,690 891 921,694 907 917,696 913 942,699 927 954,701 920 938,703 912 932,705 907 935,709 922 945,712 935 953,714 909 952,716 905 925,720 927 939,722 915 944,724 885 928,726 880 900,729 897 915,731 870 917,734 858 882,737 858 875,740 843 878,742 842 858,746 845 863,748 815 840,750 826 850,752 842 870,755 862 893,757 885 900,761 891 906,765 887 907,768 895 924,770 917 928,774 893 922,776 892 913,780 895 917,783 872 906,785 872 883,787 858 880,789 872 890,791 805 843,793 800 833,796 800 831,799 806 832,802 809 821,806 804 822,809 786 825,811 782 805,813 775 810,815 806 828,819 819 835,822 804 832,824 787 809,826 750 792,829 727 756,830 725 756,832 711 750,835 694 728,838 692 723,841 699 718,844 704 728,845 713 727,849 714 746,850 698 727,854 685 714,856 687 703,860 688 712,864 692 716,865 703 725,869 707 718,871 683 718,873 706 737,876 714 735,879 711 727,880 727 742,882 723 740,886 712 733,889 709 723,891 665 723,894 651 685,895 632 656,898 633 650,899 639 662,902 656 668,904 658 678,906 638 672,909 634 654,912 621 653,915 618 648,917 630 657,919 623 650,921 618 636,924 586 623,925 595 610,927 561 621,930 552 573,932 552 571,936 533 576,938 521 562,940 525 556,944 497 538,945 498 517,947 475 515,949 481 502,951 483 536,954 508 522,956 505 540,959 525 552,962 497 530,965 500 522,966 515 550,969 520 553,971 516 558,973 521 543,975 503 535,979 505 532,982 507 517,984 465 523,986 450 473,989 421 462,990 450 483,992 474 505,995 452 495,999 465 490,1001 458 478,1003 425 473,1005 414 440,1007 435 462,1010 452 470,1012 447 487,1014 470 500,1016 449 478,1020 443 462,1023 436 491,1025 461 490,1027 444 467,1029 463 501,1031 493 526,1034 513 540,1036 511 538,1039 503 522,1040 507 535,1042 522 548,1044 517 540,1049 533 557,1051 528 540,1054 503 533,1055 489 513,1059 487 510,1062 507 518,1064 513 533,1066 511 536,1069 493 523,1070 493 524,1072 520 537,1077 506 528,1079 501 566,1081 561 588,1084 561 582,1087 561 577,1090 551 575,1092 549 580,1096 575 595,1099 577 587,1100 562 585,1104 554 573,1105 555 568,1107 511 560,1109 492 517,1114 505 523,1116 510 538,1118 527 542,1120 503 532,1124 464 500,1126 458 478,1129 472 503,1131 485 507,1133 468 510,1135 465 495,1137 486 503,1139 487 511,1142 496 517,1146 520 536,1150 515 540,1152 502 537,1154 492 522,1157 508 528,1159 510 534,1163 478 503,1167 487 507,1170 485 496,1172 475 494,1174 459 483,1176 437 467,1179 418 443,1180 423 443,1184 415 443,1185 417 437,1187 427 458,1189 453 473,1191 439 470,1194 425 469,1196 371 435,1198 346 382,1200 349 378,1202 336 384,1204 356 389,1206 345 372,1210 352 372,1211 342 370,1214 305 347,1215 263 321,1218 278 320,1219 299 330,1222 292 332,1224 285 314,1226 269 314,1229 270 306,1230 285 322,1232 298 339,1234 308 361,1237 347 372,1239 345 376,1241 344 366,1243 320 347,1245 288 352,1248 272 294,1250 257 311,1253 298 320,1254 306 336,1256 322 348,1258 326 357,1261 332 350,1263 325 353,1265 328 368,1267 363 381,1269 352 393,1271 332 360,1273 322 353,1276 303 334,1279 295 315,1280 293 343,1282 333 352,1286 307 338,1289 306 327,1291 315 343,1293 330 356,1295 324 358,1297 326 363,1299 328 362,1301 313 348,1304 319 343,1306 289 332,1308 284 318,1310 303 343,1312 333 347,1317 330 348,1319 332 358,1323 347 369,1325 346 372,1327 333 357,1330 317 343,1332 311 328,1334 317 343,1338 312 333,1340 305 330,1343 311 333,1345 310 336,1347 326 360,1349 347 377,1351 362 384,1353 364 390,1356 374 412,1359 399 426,1360 398 422,1362 417 450,1364 434 465,1367 442 462,1370 447 473,1373 466 499,1375 480 504,1377 463 498,1380 455 482,1382 446 469,1384 466 503,1386 494 523,1390 505 528,1393 514 541,1395 503 527,1397 516 554,1401 535 564,1404 537 577,1406 567 610,1407 554 608,1411 538 567,1413 539 573,1415 522 561,1417 536 562,1419 514 542,1421 499 523,1424 509 536,1426 506 527,1428 510 534,1431 495 592,1434 571 599,1437 572 592,1438 566 603,1440 582 601,1442 569 611,1444 555 580,1447 542 571,1449 540 567,1451 554 599,1453 577 605,1456 550 593,1458 549 582,1462 553 568,1464 541 563,1467 523 548,1469 517 542,1470 525 553,1473 527 557,1475 545 563,1478 547 576,1480 538 563,1481 532 563,1483 553 573,1485 560 589,1487 535 571,1490 528 558,1492 536 570,1496 532 566,1498 557 573,1500 549 563,1503 532 552,1505 547 562,1508 558 585,1510 577 593,1511 582 602,1513 577 593,1517 572 590,1519 580 603,1520 602 650,1522 637 659,1524 638 670,1527 655 681,1529 645 663,1531 633 658,1533 618 649,1536 582 620,1538 574 600,1541 567 602,1544 549 583,1547 536 558,1550 540 563,1552 550 582,1554 570 587,1558 573 603,1560 568 592,1562 560 578,1563 567 595,1565 570 605,1568 566 592,1570 563 590,1572 546 577,1574 539 562,1578 538 562,1580 541 563,1583 518 557,1585 512 527,1587 508 537,1589 515 535,1591 513 537,1593 527 566,1596 563 590,1598 572 592,1600 580 611,1602 592 625,1604 597 625,1607 602 628,1611 607 636,1613 592 620,1616 579 607,1620 577 602,1622 574 597,1624 582 613,1627 597 628,1629 603 637,1630 598 633,1633 617 635,1635 622 650,1638 637 662,1640 637 670,1643 640 667,1645 643 680,1647 632 677,1649 625 650,1654 622 647,1656 614 637,1658 630 665,1660 653 675,1663 668 709,1665 668 710,1667 657 693,1669 650 692,1671 633 673,1674 623 650,1676 623 637,1680 637 660,1683 648 672,1687 657 688,1689 658 693,1691 643 668,1693 647 679,1698 642 674,1700 648 678,1702 640 663,1707 633 660,1709 650 679,1713 650 670,1714 660 691,1718 650 682,1720 647 670,1722 633 660,1724 619 647,1726 620 667,1729 630 655,1731 633 665,1733 623 650,1736 620 637,1738 616 672,1740 637 679,1744 637 660,1746 620 648,1749 594 633,1751 590 617,1753 600 627,1756 620 638,1758 618 653,1762 637 658,1767 640 662,1770 643 667,1773 650 683,1775 642 681,1778 633 650,1782 613 637,1784 609 643,1787 618 637,1790 633 653,1793 650 663,1796 660 673,1799 670 692,1803 668 693,1805 677 698,1807 680 703,1811 670 687,1813 660 690,1816 662 675,1819 665 675,1821 657 672,1823 647 662,1826 647 662,1828 641 657,1829 645 663`
    .split(',').map(row => row.split(' ').map(Number));

// moving averages
const mme200 = '0,695 17,708 34,714 53,722 72,732 86,738 103,744 122,741 137,741 149,746 160,747 181,744 191,742 208,735 236,729 261,719 290,719 301,716 324,714 349,717 379,724 400,725 419,722 490,720 505,724 520,730 537,732 553,743 587,767 614,791 629,802 660,813 676,817 696,825 714,834 731,840 755,842 778,848 790,851 824,845 846,833 869,820 890,811 922,788 949,758 985,722 1006,697 1028,675 1053,659 1074,644 1106,634 1114,629 1139,615 1161,607 1179,597 1196,583 1209,570 1234,542 1261,517 1282,500 1304,485 1325,472 1346,457 1359,454 1376,454 1396,458 1407,464 1431,471 1456,483 1504,496 1518,501 1533,512 1562,518 1580,523 1594,524 1627,534 1647,546 1692,566 1729,582 1753,587 1786,594 1807,602 1829,608';
const mme34 = '0,822 4,833 11,845 20,840 29,828 41,826 53,818 61,825 82,823 90,826 102,823 110,800 120,777 130,767 140,770 148,781 159,781 168,772 175,755 186,747 200,717 210,702 221,696 229,695 237,692 244,677 255,668 263,668 274,680 281,688 290,698 300,688 311,691 322,689 328,700 341,715 356,727 364,737 375,746 387,742 400,741 408,727 419,717 436,719 451,713 462,714 482,712 490,718 503,735 513,757 522,764 530,760 541,770 551,802 564,837 573,851 582,856 589,868 600,898 612,918 623,928 636,928 650,917 660,907 664,905 672,894 683,894 696,900 706,907 721,915 730,913 742,898 753,885 764,888 779,896 790,891 799,875 814,852 824,845 833,818 842,793 849,782 860,758 871,747 889,739 897,718 912,695 919,688 931,657 942,625 953,593 965,573 977,560 983,553 994,531 1007,508 1027,490 1039,496 1054,507 1075,509 1086,522 1105,541 1119,535 1137,514 1159,517 1173,508 1184,488 1195,478 1204,453 1211,437 1221,403 1232,377 1241,373 1252,354 1270,353 1287,342 1302,341 1309,336 1325,339 1345,333 1352,340 1361,353 1370,375 1382,407 1395,440 1404,470 1417,490 1429,499 1441,522 1456,537 1478,541 1486,545 1504,546 1518,557 1528,583 1533,589 1539,588 1549,580 1570,579 1582,572 1591,561 1600,567 1613,582 1625,585 1635,597 1645,612 1658,620 1668,637 1680,638 1688,645 1719,656 1731,653 1745,648 1756,641 1774,648 1788,643 1807,655 1819,659 1829,659';
const mme20 = '0,857 4,870 11,881 15,872 20,860 29,833 38,831 53,817 61,828 69,824 82,822 90,827 102,823 110,790 119,754 130,749 140,760 148,780 159,780 162,770 168,765 176,740 187,731 200,697 210,679 217,682 221,679 229,684 237,681 243,660 255,655 263,658 274,678 283,700 290,706 298,689 311,693 322,687 328,707 341,723 351,737 358,742 372,760 376,760 385,746 394,747 402,738 410,718 419,707 425,712 436,716 442,711 452,708 462,713 482,710 490,717 503,745 513,772 521,781 530,770 535,770 541,783 551,827 562,863 568,877 572,880 580,877 588,890 600,927 610,943 617,946 622,951 636,938 646,922 654,907 662,902 672,885 679,885 687,895 694,899 703,908 712,917 721,921 730,915 739,895 746,882 752,874 764,882 771,892 779,897 789,891 794,877 803,857 814,835 822,831 828,813 842,763 849,753 858,730 871,722 889,724 897,697 905,688 912,673 918,667 928,638 939,600 944,582 950,563 955,552 964,542 973,537 982,529 989,508 1000,497 1007,482 1021,473 1027,472 1034,485 1046,504 1054,507 1075,511 1086,532 1100,552 1105,553 1112,542 1119,538 1127,522 1139,507 1150,512 1159,514 1173,503 1180,482 1186,471 1191,469 1196,458 1202,433 1211,412 1218,377 1228,346 1233,343 1242,347 1247,332 1252,328 1262,332 1270,341 1279,334 1289,331 1300,336 1308,329 1318,334 1325,340 1337,334 1345,331 1352,342 1359,358 1364,380 1370,393 1375,417 1382,433 1389,457 1398,483 1406,508 1415,522 1429,522 1441,548 1446,549 1453,557 1462,558 1470,551 1486,552 1504,551 1518,567 1525,600 1532,607 1539,602 1550,582 1570,579 1582,568 1591,553 1600,563 1613,584 1623,587 1633,603 1644,627 1656,633 1668,653 1676,651 1688,657 1719,662 1729,655 1745,650 1756,637 1774,648 1788,639 1807,662 1817,665 1829,662';

// support and resistance zones: top, bottom, colour, opacity
const zones = [
    [406, 431, '#f00', 0.22],
    [456, 488, '#f00', 0.28],
    [573, 596, '#ff9d00', 0.38],
    [629, 649, '#ff9d00', 0.38],
    [718, 742, '#0f0', 0.34],
    [790, 799, '#0f0', 0.38],
    [834, 848, '#0f0', 0.34],
    [919, 945, '#0f0', 0.34]
];

const levels = [495, 504, 519, 523, 532, 599, 620, 625, 660, 665, 670, 694, 698];

// pivot points: x, y, colour
const pivots = [
    [1829, 529, '#f00'], [1829, 573, '#0d0'], [1829, 615, '#00d8ff'], [1829, 701, '#00d8ff'],
    [1829, 745, '#0f0'], [1829, 787, '#f00'], [1820, 622, '#f00'], [1820, 639, '#4d2'],
    [1820, 654, '#00d8ff'], [1829, 659, '#ff9d00'], [1820, 671, '#d0f'], [1820, 686, '#00d8ff'],
    [1820, 704, '#0f0'], [1820, 719, '#a50']
];

const months = [
    ['2016', 70], ['févr.', 112], ['mars', 159], ['avr.', 206], ['mai', 251], ['juin', 298], ['juil.', 345],
    ['août', 394], ['sept.', 443], ['oct.', 489], ['nov.', 535], ['déc.', 583],
    ['2017', 632], ['févr.', 678], ['mars', 723], ['avr.', 770], ['mai', 813], ['juin', 863], ['juil.', 910],
    ['août', 958], ['sept.', 1009], ['oct.', 1051], ['nov.', 1099], ['déc.', 1147],
    ['2018', 1192], ['févr.', 1238], ['mars', 1283], ['avr.', 1328], ['mai', 1373], ['juin', 1422], ['juil.', 1467],
    ['août', 1518], ['sept.', 1568], ['oct.', 1609], ['nov.', 1659], ['déc.', 1707],
    ['2019', 1752], ['mars', 1843]
];

// price axis: text, y, classes (later ones lie on top)
const prices = [
    ['1,245756', 288, 'wide'],
    ['1,240000', 310, ''],
    ['1,200000', 445, ''],
    ['1,080000', 850, ''],
    ['1,040000', 986, ''],
    ['1,182359', 504, 'box'],
    ['', 519, 'box'],
    ['1,176895', 523, 'box'],
    ['1,173694', 534, 'box'],
    ['1,186210', 491, 'tag'],
    ['1,171605', 540, 'tag lime'],
    ['', 580, 'box'],
    ['', 596, 'box'],
    ['', 620, 'box'],
    ['', 694, 'box'],
    ['1,158160', 586, 'tag aqua'],
    ['1,154627', 597, 'tag'],
    ['', 635, 'tag orange'],
    ['1,142306', 640, 'tag lime'],
    ['1,147462', 622, 'tag'],
    ['1,139756', 648, 'tag aqua'],
    ['', 672, 'tag violet'],
    ['', 680, 'tag aqua'],
    ['1,128352', 687, 'tag aqua'],
    ['', 704, 'tag lime'],
    ['1,123178', 704, 'tag lime'],
    ['1,115505', 730, 'tag lime'],
    ['1,118797', 719, 'tag'],
    ['1,102060', 775, 'tag'],
    ['1,136495', 658, 'wide last'],
    ['1,132185', 672, 'wide']
];

function draw(name, attributes) {
    const node = document.createElementNS(SVG_NS, name);
    Object.entries(attributes).forEach(([key, value]) => node.setAttribute(key, value));
    plot.appendChild(node);
}

function drawBars() {
    let up = '';
    let down = '';
    let previous = bars[0];
    bars.forEach(bar => {
        const [x, high, low] = bar;
        // days missing from the feed are filled with the average of their neighbours
        if (x - previous[0] > 3) {
            const midX = Math.round((x + previous[0]) / 2);
            const midHigh = Math.round((high + previous[1]) / 2);
            const midLow = Math.round((low + previous[2]) / 2);
            const path = `M${midX}.5 ${midHigh}V${midLow}`;
            if (midX % 2) {
                up += path;
            } else {
                down += path;
            }
        }
        const path = `M${x}.5 ${high}V${low}`;
        if (high + low < previous[1] + previous[2]) {
            up += path;
        } else {
            down += path;
        }
        previous = bar;
    });
    draw('path', { d: up, class: 'up' });
    draw('path', { d: down, class: 'down' });
}

function drawPlot() {
    drawBars();
    draw('polyline', { points: mme200, class: 'ma slow', stroke: '#f00' });
    draw('polyline', { points: mme34, class: 'ma', stroke: '#0f0' });
    draw('polyline', { points: mme20, class: 'ma', stroke: '#00d8ff' });
    draw('path', { d: 'M0 659.5H1857', class: 'level' });
    levels.forEach(y => draw('path', { d: `M1295 ${y}.5H1857`, class: 'level' }));
    draw('path', { d: 'M1295 581H1857', class: 'level', 'stroke-width': 2 });
    zones.forEach(([top, bottom, color, opacity]) => {
        draw('rect', { x: 0, y: top, width: VIEW.width, height: bottom - top, fill: color, 'fill-opacity': opacity, class: 'zone' });
        draw('path', { d: `M0 ${top}.5H1857M0 ${bottom}.5H1857`, stroke: color, class: 'zone' });
    });
    pivots.forEach(([x, y, color]) => draw('path', { d: `M${x} ${y}H1857`, stroke: color, 'stroke-width': 2, opacity: 0.75 }));
    draw('path', { d: 'M.5 203V1057', class: 'level' });
    draw('path', { d: 'M1825.500 214.500v-7l6-6 6 6v7z', fill: '#b5b5b5', stroke: '#333' });
}

function addLabel(parent, text, className) {
    const label = document.createElement('span');
    label.textContent = text;
    label.className = className;
    parent.appendChild(label);
    return label;
}

function drawAxes() {
    const timeAxis = document.getElementById('time-axis');
    months.forEach(([text, x]) => {
        const label = addLabel(timeAxis, text, text.startsWith('20') ? 'year' : '');
        label.style.left = x / 1920 * 100 + '%';
    });
    addLabel(timeAxis, 'ven., 8 févr. 2019', 'cursor-date').style.left = 1797 / 1920 * 100 + '%';

    const priceAxis = document.getElementById('price-axis');
    prices.forEach(([text, y, type]) => {
        const label = addLabel(priceAxis, text, 'price ' + type);
        label.style.top = (y - VIEW.top) / (VIEW.height + 2) * 100 + '%';
    });
}

drawPlot();
drawAxes();
```
